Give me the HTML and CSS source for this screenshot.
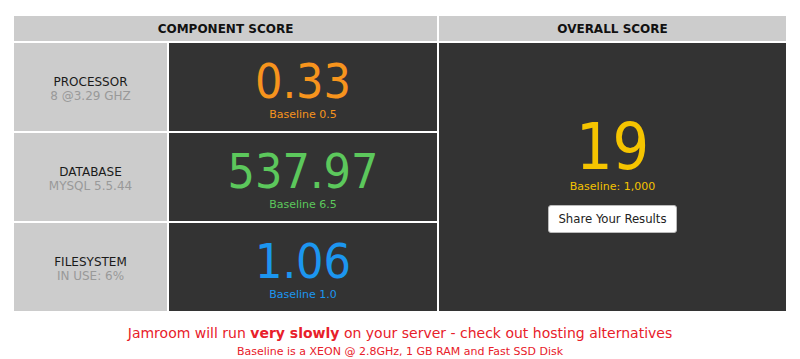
FILE: index.html
```html
<!DOCTYPE html>
<html lang="en">
<head>
  <meta charset="UTF-8">
  <title>Performance Check</title>
  <link rel="stylesheet" href="styles.css">
</head>
<body>
  <!-- Score grid -->
  <div class="scores">
    <div class="head head-comp">COMPONENT SCORE</div>
    <div class="head">OVERALL SCORE</div>

    <div class="label">
      <div class="name">PROCESSOR</div>
      <div class="sub">8 @3.29 GHZ</div>
    </div>
    <div class="value orange">
      <div class="num">0.33</div>
      <div class="base">Baseline 0.5</div>
    </div>

    <div class="overall">
      <div class="big">19</div>
      <div class="base">Baseline: 1,000</div>
      <button class="share">Share Your Results</button>
    </div>

    <div class="label">
      <div class="name">DATABASE</div>
      <div class="sub">MYSQL 5.5.44</div>
    </div>
    <div class="value green">
      <div class="num">537.97</div>
      <div class="base">Baseline 6.5</div>
    </div>

    <div class="label">
      <div class="name">FILESYSTEM</div>
      <div class="sub">IN USE: 6%</div>
    </div>
    <div class="value blue">
      <div class="num">1.06</div>
      <div class="base">Baseline 1.0</div>
    </div>
  </div>

  <!-- Warning -->
  <div class="notice">
    <p class="warn">Jamroom will run <b>very slowly</b> on your server - check out hosting alternatives</p>
    <p class="note">Baseline is a XEON @ 2.8GHz, 1 GB RAM and Fast SSD Disk</p>
  </div>
</body>
</html>
```

FILE: styles.css
```css
* {
  margin: 0;
  padding: 0;
  box-sizing: border-box;
}

body {
  font-family: "DejaVu Sans", Verdana, sans-serif;
  background: #fff;
  padding: 16px 15px 0 14px;
}

/* Score grid */
.scores {
  display: grid;
  grid-template-columns: 153px 268px 347px;
  grid-template-rows: 25px 88px 88px 88px;
  gap: 2px;
  width: 772px;
}

.head {
  background: #cccccc;
  color: #111;
  font-weight: bold;
  font-size: 12px;
  display: flex;
  align-items: center;
  justify-content: center;
}

.head-comp {
  grid-column: 1 / 3;
}

.label {
  background: #cccccc;
  display: flex;
  flex-direction: column;
  align-items: center;
  justify-content: center;
  font-size: 12px;
  line-height: 14px;
  padding-top: 4px;
}

.label .name {
  color: #1a1a1a;
}

.label .sub {
  color: #999;
}

.value {
  background: #333;
  display: flex;
  flex-direction: column;
  align-items: center;
  justify-content: center;
  padding-top: 2px;
}

.num {
  font-family: "DejaVu Sans Condensed", "DejaVu Sans", sans-serif;
  font-size: 48px;
  line-height: 52px;
}

.base {
  font-size: 11px;
  line-height: 14px;
  margin-top: 1px;
}

.orange { color: #f7941d; }
.green { color: #5cc85c; }
.blue { color: #1c96f0; }

.overall {
  grid-column: 3;
  grid-row: 2 / 5;
  background: #333;
  color: #f5c400;
  display: flex;
  flex-direction: column;
  align-items: center;
  justify-content: center;
  padding-bottom: 8px;
}

.big {
  font-family: "DejaVu Sans Condensed", "DejaVu Sans", sans-serif;
  font-size: 64px;
  line-height: 66px;
}

.overall .base {
  margin-top: 0;
}

.share {
  margin-top: 11px;
  background: #fff;
  border: 1px solid #bbb;
  border-radius: 3px;
  font-family: "DejaVu Sans Condensed", "DejaVu Sans", sans-serif;
  font-size: 13px;
  color: #222;
  padding: 5px 9px 6px;
  cursor: pointer;
}

/* Warning text */
.notice {
  text-align: center;
  color: #e8202a;
  padding-top: 13px;
  width: 772px;
}

.warn {
  font-size: 14px;
  line-height: 18px;
}

.note {
  font-size: 11px;
  line-height: 16px;
  padding-top: 2px;
}
```
